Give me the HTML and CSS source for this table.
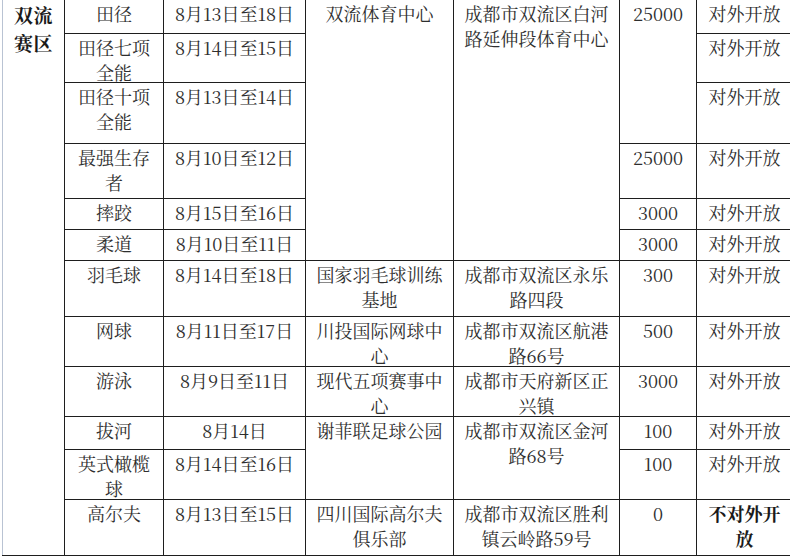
FILE: index.html
```html
<!DOCTYPE html>
<html lang="zh-CN">
<head>
<meta charset="utf-8">
<title>双流赛区</title>
<link rel="stylesheet" href="styles.css">
</head>
<body>
<table class="sched">
  <colgroup>
    <col class="c-region">
    <col class="c-sport">
    <col class="c-date">
    <col class="c-venue">
    <col class="c-addr">
    <col class="c-cap">
    <col class="c-open">
  </colgroup>
  <tbody>
    <tr class="r1">
      <td class="region" rowspan="12"><div class="t">双流<br>赛区</div></td>
      <td><div class="t">田径</div></td>
      <td><div class="t">8月13日至18日</div></td>
      <td rowspan="6"><div class="t">双流体育中心</div></td>
      <td rowspan="6"><div class="t">成都市双流区白河<br>路延伸段体育中心</div></td>
      <td rowspan="3"><div class="t">25000</div></td>
      <td><div class="t">对外开放</div></td>
    </tr>
    <tr class="r2">
      <td><div class="t">田径七项<br>全能</div></td>
      <td><div class="t">8月14日至15日</div></td>
      <td><div class="t">对外开放</div></td>
    </tr>
    <tr class="r3">
      <td><div class="t">田径十项<br>全能</div></td>
      <td><div class="t">8月13日至14日</div></td>
      <td><div class="t">对外开放</div></td>
    </tr>
    <tr class="r4">
      <td><div class="t">最强生存<br>者</div></td>
      <td><div class="t">8月10日至12日</div></td>
      <td><div class="t">25000</div></td>
      <td><div class="t">对外开放</div></td>
    </tr>
    <tr class="r5">
      <td><div class="t">摔跤</div></td>
      <td><div class="t">8月15日至16日</div></td>
      <td><div class="t">3000</div></td>
      <td><div class="t">对外开放</div></td>
    </tr>
    <tr class="r6">
      <td><div class="t">柔道</div></td>
      <td><div class="t">8月10日至11日</div></td>
      <td><div class="t">3000</div></td>
      <td><div class="t">对外开放</div></td>
    </tr>
    <tr class="r7">
      <td><div class="t">羽毛球</div></td>
      <td><div class="t">8月14日至18日</div></td>
      <td><div class="t">国家羽毛球训练<br>基地</div></td>
      <td><div class="t">成都市双流区永乐<br>路四段</div></td>
      <td><div class="t">300</div></td>
      <td><div class="t">对外开放</div></td>
    </tr>
    <tr class="r8">
      <td><div class="t">网球</div></td>
      <td><div class="t">8月11日至17日</div></td>
      <td><div class="t">川投国际网球中<br>心</div></td>
      <td><div class="t">成都市双流区航港<br>路66号</div></td>
      <td><div class="t">500</div></td>
      <td><div class="t">对外开放</div></td>
    </tr>
    <tr class="r9">
      <td><div class="t">游泳</div></td>
      <td><div class="t">8月9日至11日</div></td>
      <td><div class="t">现代五项赛事中<br>心</div></td>
      <td><div class="t">成都市天府新区正<br>兴镇</div></td>
      <td><div class="t">3000</div></td>
      <td><div class="t">对外开放</div></td>
    </tr>
    <tr class="r10">
      <td><div class="t">拔河</div></td>
      <td><div class="t">8月14日</div></td>
      <td rowspan="2"><div class="t">谢菲联足球公园</div></td>
      <td rowspan="2"><div class="t">成都市双流区金河<br>路68号</div></td>
      <td><div class="t">100</div></td>
      <td><div class="t">对外开放</div></td>
    </tr>
    <tr class="r11">
      <td><div class="t">英式橄榄<br>球</div></td>
      <td><div class="t">8月14日至16日</div></td>
      <td><div class="t">100</div></td>
      <td><div class="t">对外开放</div></td>
    </tr>
    <tr class="r12">
      <td><div class="t">高尔夫</div></td>
      <td><div class="t">8月13日至15日</div></td>
      <td><div class="t">四川国际高尔夫<br>俱乐部</div></td>
      <td><div class="t">成都市双流区胜利<br>镇云岭路59号</div></td>
      <td><div class="t">0</div></td>
      <td class="strong"><div class="t">不对外开<br>放</div></td>
    </tr>
  </tbody>
</table>
</body>
</html>
```
FILE: styles.css
```css
html, body {
  margin: 0;
  padding: 0;
  background: #ffffff;
  overflow: hidden;
}

.sched {
  border-collapse: collapse;
  table-layout: fixed;
  width: 790px;
  margin-left: 2px;
  margin-top: -1px;
  font-family: "Noto Serif CJK SC", "Liberation Serif", "Noto Sans CJK SC", serif;
  font-size: 18px;
  line-height: 25px;
  color: #2e2e2e;
}

.c-region { width: 62px; }
.c-sport { width: 99px; }
.c-date { width: 142px; }
.c-venue { width: 148px; }
.c-addr { width: 166px; }
.c-cap { width: 77px; }
.c-open { width: 96px; }

.sched td {
  border: 1px solid #1e1e1e;
  padding: 1px 0 0 0;
  vertical-align: top;
  text-align: center;
  white-space: nowrap;
}

.sched .t {
  margin-bottom: -12px;
}

.sched td.region {
  border-left: 1px solid #b9c3d3;
  font-weight: bold;
  font-size: 19px;
  line-height: 28px;
  color: #1a1a1a;
  letter-spacing: 0.5px;
}

.sched td.strong {
  font-weight: bold;
  color: #1a1a1a;
}

.r1 { height: 34px; }
.r2 { height: 49px; }
.r3 { height: 61px; }
.r4 { height: 55px; }
.r5 { height: 31px; }
.r6 { height: 31px; }
.r7 { height: 56px; }
.r8 { height: 50px; }
.r9 { height: 50px; }
.r10 { height: 33px; }
.r11 { height: 50px; }
.r12 { height: 56px; }
```
